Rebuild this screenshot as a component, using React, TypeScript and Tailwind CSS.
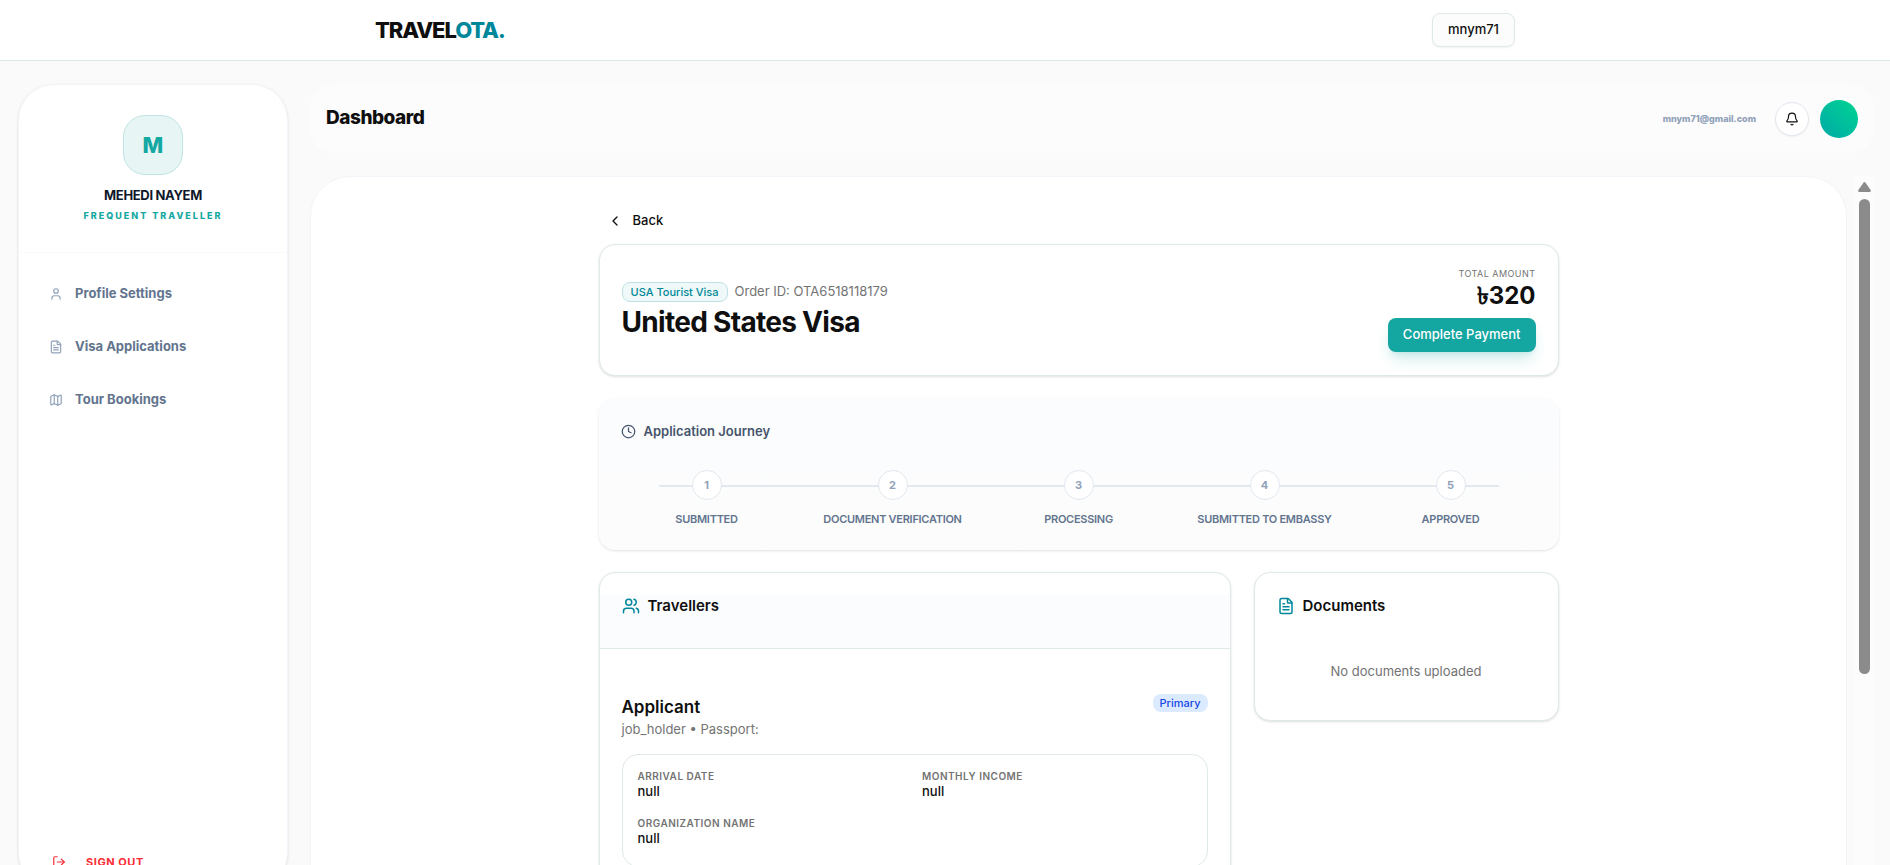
import React from "react";
import {
  Bell,
  ChevronLeft,
  Clock,
  FileText,
  LogOut,
  Map,
  User,
  Users,
} from "lucide-react";

const menu = [
  { label: "Profile Settings", icon: User },
  { label: "Visa Applications", icon: FileText },
  { label: "Tour Bookings", icon: Map },
];

const steps = [
  "Submitted",
  "Document Verification",
  "Processing",
  "Submitted to Embassy",
  "Approved",
];

const details = [
  { label: "Arrival Date", value: "null" },
  { label: "Monthly Income", value: "null" },
  { label: "Organization Name", value: "null" },
];

function Navbar() {
  return (
    <header className="shrink-0 bg-white border-b border-[#dfe9e8]">
      <div className="max-w-[1140px] h-15 mx-auto flex items-center justify-between">
        <a href="#" className="text-[22px] font-extrabold tracking-tighter">
          TRAVEL<span className="text-[#00879a]">OTA.</span>
        </a>
        <button className="h-[34px] px-[15px] text-[13px] font-medium bg-[#fcfcfc] border border-[#dfe9e8] rounded-lg shadow-xs">
          mnym71
        </button>
      </div>
    </header>
  );
}

function Sidebar() {
  return (
    <aside className="w-[270px] h-[calc(100vh-60px)] shrink-0 flex flex-col bg-white border border-slate-100 rounded-[36px] shadow-sm">
      <div className="pt-[30px] pb-7 flex flex-col items-center border-b border-slate-50">
        <div className="size-15 flex items-center justify-center rounded-[22px] bg-[#e7f5f4] border border-[#bfe5e3] text-[#14a8a2] text-[22px] font-extrabold">
          M
        </div>
        <h2 className="mt-2.5 text-[13px] leading-5 font-bold tracking-tight text-slate-900">
          MEHEDI NAYEM
        </h2>
        <p className="mt-[3px] text-[9px] leading-4 font-extrabold tracking-[2px] text-[#14a8a2]">
          FREQUENT TRAVELLER
        </p>
      </div>
      <nav className="flex-1 px-[30px] pt-[18px] flex flex-col gap-[7px]">
        {menu.map(({ label, icon: Icon }) => (
          <a
            key={label}
            href="#"
            className="h-[46px] flex items-center gap-3 text-[13px] font-bold text-slate-500"
          >
            <Icon size={14} className="text-slate-400" />
            {label}
          </a>
        ))}
      </nav>
      <button className="mb-4 ml-[33px] flex items-center gap-5 text-[11px] leading-5 font-bold tracking-wider text-red-500">
        <LogOut size={14} />
        SIGN OUT
      </button>
    </aside>
  );
}

function DashboardBar() {
  return (
    <div className="h-[69px] shrink-0 px-4 flex items-center justify-between bg-[#fcfcfc] rounded-3xl">
      <h1 className="text-[19px] font-extrabold tracking-tight">Dashboard</h1>
      <div className="flex items-center">
        <span className="mr-[19px] text-[9px] font-extrabold text-slate-400">
          mnym71@gmail.com
        </span>
        <button
          aria-label="Notifications"
          className="size-[34px] mr-[11px] flex items-center justify-center bg-white border border-slate-200 rounded-full shadow-xs"
        >
          <Bell size={14} />
        </button>
        <div className="size-[38px] rounded-full bg-linear-to-tr from-[#00a9a5] to-[#00d492]" />
      </div>
    </div>
  );
}

function OrderCard() {
  return (
    <section className="h-[132px] px-[22px] flex items-center justify-between bg-white border border-[#dfe9e8] rounded-2xl shadow-sm">
      <div>
        <div className="flex items-center gap-[7px]">
          <span className="h-5 px-2 flex items-center text-[11px] font-medium text-[#00879a] bg-[#f0f9f9] border border-[#bfe1e5] rounded-lg">
            USA Tourist Visa
          </span>
          <span className="text-[13px] text-[#737373]">
            Order ID: OTA6518118179
          </span>
        </div>
        <h2 className="mt-1 text-[28px] leading-8 font-bold tracking-tight">
          United States Visa
        </h2>
      </div>
      <div className="flex flex-col items-end">
        <span className="text-[9px] leading-3 tracking-wider text-[#737373]">
          TOTAL AMOUNT
        </span>
        <span className="text-[24px] leading-8 font-bold">৳320</span>
        <button className="mt-1.5 h-[34px] px-[15px] text-[13px] font-medium text-white bg-[#14a6a1] rounded-lg shadow-lg shadow-[#14a6a1]/20">
          Complete Payment
        </button>
      </div>
    </section>
  );
}

function Journey() {
  return (
    <section className="h-[152px] pt-6 px-[15px] bg-linear-to-b from-[#fbfcfe] to-[#fcfcfc] rounded-2xl shadow-sm">
      <h3 className="px-[7px] flex items-center gap-2 text-[13px] leading-[18px] font-semibold text-slate-600">
        <Clock size={15} />
        Application Journey
      </h3>
      <div className="relative mt-[30px]">
        <div className="absolute top-[15px] inset-x-[45px] h-0.5 bg-slate-200" />
        <ol className="relative grid grid-cols-5">
          {steps.map((step, i) => (
            <li key={step} className="flex flex-col items-center">
              <span className="size-[30px] flex items-center justify-center text-[11px] font-bold text-slate-400 bg-white border border-slate-200 rounded-full">
                {i + 1}
              </span>
              <span className="mt-[11px] text-[11px] leading-4 font-semibold tracking-tight uppercase text-slate-500">
                {step}
              </span>
            </li>
          ))}
        </ol>
      </div>
    </section>
  );
}

function Travellers() {
  return (
    <section className="bg-white border border-[#dfe9e8] rounded-2xl shadow-sm">
      <div className="pt-[22px] border-b border-[#dfe9e8]">
        <h3 className="h-[53px] px-[22px] flex items-start gap-2 text-[15px] leading-[22px] font-semibold bg-[#fbfcfe]">
          <Users size={18} className="mt-0.5 text-[#00879a]" />
          Travellers
        </h3>
      </div>
      <div className="px-[22px] pt-[45px] pb-6">
        <div className="flex items-start justify-between">
          <div>
            <h4 className="text-[17px] leading-[26px] font-semibold">
              Applicant
            </h4>
            <p className="text-[13px] leading-[18px] text-[#737373]">
              job_holder • Passport:
            </p>
          </div>
          <span className="h-[18px] px-[7px] flex items-center text-[11px] font-medium text-blue-700 bg-blue-100 rounded-lg">
            Primary
          </span>
        </div>
        <dl className="mt-4 px-[15px] pt-[15px] pb-[18px] grid grid-cols-2 gap-x-[15px] gap-y-4 border border-[#dfe9e8] rounded-2xl">
          {details.map((d) => (
            <div key={d.label}>
              <dt className="text-[10px] leading-3 font-semibold tracking-wider uppercase text-[#737373]">
                {d.label}
              </dt>
              <dd className="text-[13px] leading-[19px] font-medium">
                {d.value}
              </dd>
            </div>
          ))}
        </dl>
      </div>
    </section>
  );
}

function Documents() {
  return (
    <section className="h-[149px] bg-white border border-[#dfe9e8] rounded-2xl shadow-sm">
      <h3 className="pt-[22px] px-[22px] flex items-center gap-2 text-[15px] leading-[22px] font-semibold">
        <FileText size={18} className="text-[#00879a]" />
        Documents
      </h3>
      <p className="mt-11 text-center text-[13px] leading-5 text-[#737373]">
        No documents uploaded
      </p>
    </section>
  );
}

function Scrollbar() {
  return (
    <div className="w-[19px] shrink-0 pt-1.5 flex flex-col items-center gap-[7px] bg-[#fcfcfc]">
      <svg width="13" height="10" viewBox="0 0 13 10" fill="#8b8b8b">
        <path d="M5.4.8a1.4 1.4 0 0 1 2.2 0l5 7.1c.6.9.2 2.1-.9 2.1H1.3C.2 10-.2 8.8.4 7.9z" />
      </svg>
      <div className="w-[11px] h-[475px] bg-[#8b8b8b] rounded-full" />
    </div>
  );
}

export default function App() {
  return (
    <div className="h-screen overflow-hidden flex flex-col bg-[#fafafa] text-[#0f0f0f] font-['Inter',sans-serif]">
      <Navbar />
      <div className="flex-1 min-h-0 pt-[23px] pl-[18px] pr-4 flex gap-[22px]">
        <Sidebar />
        <div className="flex-1 min-w-0 flex flex-col gap-[23px]">
          <DashboardBar />
          <div className="flex-1 min-h-0 flex gap-2">
            <main className="flex-1 h-[1020px] pt-8 bg-white border border-slate-100 rounded-[40px]">
              <div className="max-w-[960px] mx-auto">
                <button className="ml-2 h-6 flex items-center gap-2.5 text-[13px] font-medium">
                  <ChevronLeft size={16} />
                  Back
                </button>
                <div className="mt-[11px] flex flex-col gap-[22px]">
                  <OrderCard />
                  <Journey />
                  <div className="grid grid-cols-[minmax(0,1fr)_305px] items-start gap-[23px]">
                    <Travellers />
                    <Documents />
                  </div>
                </div>
              </div>
            </main>
            <Scrollbar />
          </div>
        </div>
      </div>
    </div>
  );
}
